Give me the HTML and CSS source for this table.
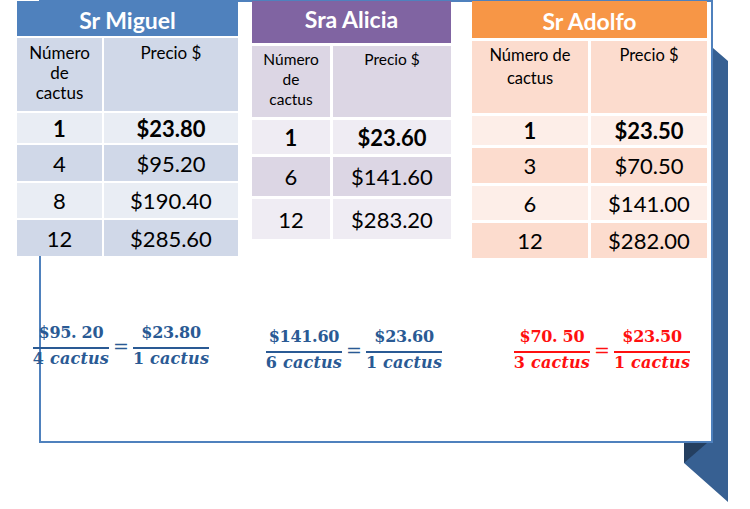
FILE: index.html
```html
<!DOCTYPE html>
<html lang="es">
<head>
<meta charset="utf-8">
<title>Precios de cactus</title>
<link rel="stylesheet" href="styles.css">
</head>
<body>
<div class="page">
  <div class="frame">
    <div class="tables">
      <div class="tbl tbl-miguel">
        <div class="title">Sr Miguel</div>
        <div class="cell head">Número<br>de<br>cactus</div>
        <div class="cell head">Precio $</div>
        <div class="cell light bold">1</div><div class="cell light bold">$23.80</div>
        <div class="cell band">4</div><div class="cell band">$95.20</div>
        <div class="cell light">8</div><div class="cell light">$190.40</div>
        <div class="cell band">12</div><div class="cell band">$285.60</div>
      </div>
      <div class="tbl tbl-alicia">
        <div class="title">Sra Alicia</div>
        <div class="cell head">Número<br>de<br>cactus</div>
        <div class="cell head">Precio $</div>
        <div class="cell light bold">1</div><div class="cell light bold">$23.60</div>
        <div class="cell band">6</div><div class="cell band">$141.60</div>
        <div class="cell light">12</div><div class="cell light">$283.20</div>
      </div>
      <div class="tbl tbl-adolfo">
        <div class="title">Sr Adolfo</div>
        <div class="cell head">Número de<br>cactus</div>
        <div class="cell head">Precio $</div>
        <div class="cell light bold">1</div><div class="cell light bold">$23.50</div>
        <div class="cell band">3</div><div class="cell band">$70.50</div>
        <div class="cell light">6</div><div class="cell light">$141.00</div>
        <div class="cell band">12</div><div class="cell band">$282.00</div>
      </div>
    </div>
    <div class="formulas">
      <div class="eqn eqn-miguel">
        <div class="frac"><span class="num">$95. 20</span><span class="den">4 <i>cactus</i></span></div>
        <span class="eq">=</span>
        <div class="frac"><span class="num">$23.80</span><span class="den">1 <i>cactus</i></span></div>
      </div>
      <div class="eqn eqn-alicia">
        <div class="frac"><span class="num">$141.60</span><span class="den">6 <i>cactus</i></span></div>
        <span class="eq">=</span>
        <div class="frac"><span class="num">$23.60</span><span class="den">1 <i>cactus</i></span></div>
      </div>
      <div class="eqn eqn-adolfo">
        <div class="frac"><span class="num">$70. 50</span><span class="den">3 <i>cactus</i></span></div>
        <span class="eq">=</span>
        <div class="frac"><span class="num">$23.50</span><span class="den">1 <i>cactus</i></span></div>
      </div>
    </div>
  </div>
  <svg class="ribbon" width="750" height="509" viewBox="0 0 750 509" aria-hidden="true">
    <polygon points="713,48 728,61 728,502 684,463 684,443 713,443" fill="#376092"/>
    <polygon points="684,443 707,443 684,463" fill="#243f60"/>
  </svg>
</div>
</body>
</html>
```

FILE: styles.css
```css
html, body {
  margin: 0;
  padding: 0;
  background: #ffffff;
}

.page {
  position: relative;
  width: 750px;
  height: 509px;
  overflow: hidden;
  background: #ffffff;
  font-family: Lato, "Open Sans", sans-serif;
  color: #000000;
}

.frame {
  box-sizing: border-box;
  width: 674px;
  height: 443px;
  margin-left: 39px;
  border: 2px solid #4f81bd;
  display: flex;
  flex-direction: column;
}

.tables {
  display: flex;
  align-items: flex-start;
  margin: -1px 0 0 -24px;
}

.tbl {
  display: grid;
  background: #ffffff;
}

.tbl-miguel {
  grid-template-columns: 85px 134px;
  grid-template-rows: 35px 73px 30px 36px 35px 36px;
  gap: 2px;
}

.tbl-alicia {
  margin-left: 14px;
  grid-template-columns: 78px 118px;
  grid-template-rows: 42px 71px 34px 39px 40px;
  gap: 3px;
}

.tbl-adolfo {
  margin-left: 21px;
  grid-template-columns: 116px 116px;
  grid-template-rows: 37px 72px 29px 35px 34px 35px;
  gap: 3px;
}

.title {
  grid-column: 1 / -1;
  display: flex;
  align-items: center;
  justify-content: center;
  color: #ffffff;
  font-weight: 700;
  font-size: 23px;
}

.tbl-miguel .title { background: #4f81bd; padding-top: 2px; }
.tbl-alicia .title { background: #8064a2; padding-bottom: 6px; }
.tbl-adolfo .title { background: #f79646; padding-top: 2px; }

.cell {
  display: flex;
  align-items: center;
  justify-content: center;
  text-align: center;
  font-size: 22px;
}

.cell.head {
  align-items: flex-start;
  font-size: 17px;
  line-height: 20px;
  padding-top: 5px;
}

.tbl-alicia .cell.head {
  font-size: 15.5px;
  padding-top: 3px;
}

.tbl-adolfo .cell.head {
  font-size: 16.5px;
  line-height: 23px;
  padding-top: 3px;
}

.bold { font-weight: 700; }

.tbl-miguel .head,
.tbl-miguel .band { background: #d0d8e8; }
.tbl-miguel .light { background: #e9edf4; }

.tbl-alicia .head,
.tbl-alicia .band { background: #dcd6e4; }
.tbl-alicia .light { background: #efecf3; }

.tbl-adolfo .head,
.tbl-adolfo .band { background: #fcdcce; }
.tbl-adolfo .light { background: #fdeee8; }

.formulas {
  display: flex;
  align-items: flex-start;
  margin-top: 69px;
  margin-left: 0;
}

.eqn {
  width: 180px;
  display: flex;
  align-items: center;
  justify-content: center;
  gap: 4px;
  font-family: "DejaVu Serif", "Liberation Serif", serif;
  font-weight: 700;
  font-size: 16px;
  color: #2a5a94;
}

.eqn-miguel {
  margin-left: -10px;
  margin-top: -4px;
}

.eqn-alicia { margin-left: 53px; }

.eqn-adolfo {
  margin-left: 68px;
  color: #ff1010;
}

.frac {
  display: flex;
  flex-direction: column;
  align-items: stretch;
  text-align: center;
}

.num {
  line-height: 20px;
  padding-bottom: 4px;
  border-bottom: 2px solid currentColor;
  white-space: pre;
  letter-spacing: -0.3px;
}

.den {
  line-height: 20px;
  padding-top: 0;
  white-space: nowrap;
  letter-spacing: 0.2px;
}

.den i {
  font-style: italic;
}

.eq {
  font-size: 19px;
  font-weight: 400;
  line-height: 20px;
}

.ribbon {
  position: absolute;
  left: 0;
  top: 0;
  pointer-events: none;
}
```
